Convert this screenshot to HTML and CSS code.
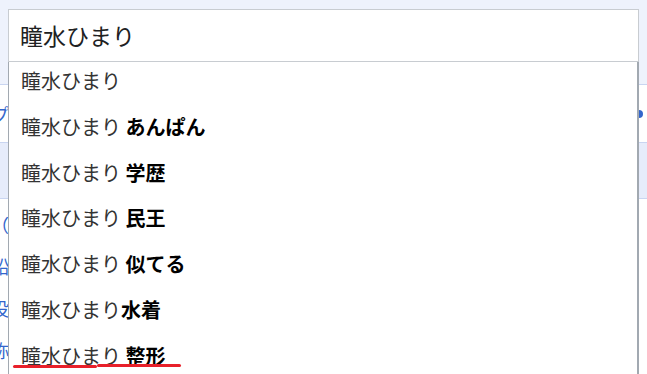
FILE: index.html
```html
<!DOCTYPE html>
<html>
<head>
  <meta charset="utf-8">
  <title>瞳水ひまり - 検索</title>
  <link rel="stylesheet" href="styles.css">
</head>
<body>
  <div class="page">
    <div class="header"></div>
    <div class="tabs">
      <span class="tab-link">プロフィール</span>
      <span class="tab-dot"></span>
    </div>
    <div class="notice"></div>
    <ul class="facts">
      <li>（愛称）</li>
      <li>鉛筆</li>
      <li>役柄</li>
      <li>称号</li>
    </ul>
  </div>

  <div class="search">
    <div class="search-input">瞳水ひまり</div>
    <ul class="suggestions">
      <li>瞳水ひまり</li>
      <li>瞳水ひまり <b>あんぱん</b></li>
      <li>瞳水ひまり <b>学歴</b></li>
      <li>瞳水ひまり <b>民王</b></li>
      <li>瞳水ひまり <b>似てる</b></li>
      <li>瞳水ひまり<b>水着</b></li>
      <li>瞳水ひまり <b>整形</b></li>
    </ul>
    <span class="squiggle one"></span>
    <span class="squiggle two"></span>
  </div>
</body>
</html>
```

FILE: styles.css
```css
* {
  margin: 0;
  padding: 0;
  box-sizing: border-box;
}
body {
  position: relative;
  width: 647px;
  height: 374px;
  overflow: hidden;
  background: #fff;
  font-family: "Noto Sans CJK JP", sans-serif;
}
.header {
  height: 85px;
  background: #eef2fc;
  border-bottom: 1px solid #c9d5f1;
}
.tabs {
  height: 58px;
  display: flex;
  justify-content: space-between;
  align-items: center;
  border-bottom: 1px solid #c9d5f1;
}
.tab-link {
  margin-left: -9px;
  color: #3366cc;
  font-size: 18px;
}
.tab-dot {
  width: 8px;
  height: 8px;
  margin-right: 4px;
  border-radius: 50%;
  background: #3366cc;
}
.notice {
  height: 56px;
  background: #e6ecfb;
  border-bottom: 1px solid #c9d5f1;
}
.facts {
  list-style: none;
  padding-top: 12px;
}
.facts li {
  height: 42px;
  margin-left: -9px;
  color: #3366cc;
  font-size: 18px;
}
.search {
  position: absolute;
  top: 9px;
  left: 8px;
  right: 8px;
  bottom: 0;
  display: flex;
  flex-direction: column;
}
.search-input {
  position: relative;
  z-index: 1;
  height: 53px;
  padding-left: 11px;
  border: 1px solid #c8ccd1;
  background: #fff;
  color: #202122;
  font-size: 23px;
  line-height: 51px;
}
.suggestions {
  flex: 1;
  margin-top: -4px;
  overflow: hidden;
  list-style: none;
  background: #fff;
  border-left: 1px solid #a2a9b1;
  border-right: 2px solid #a2a9b1;
}
.suggestions li {
  height: 45.8px;
  padding-left: 12px;
  color: #333;
  font-size: 20px;
  line-height: 45.8px;
  white-space: nowrap;
}
.suggestions b {
  color: #000;
}
.squiggle {
  position: absolute;
  height: 3px;
  border-radius: 2px;
  background: #e8202a;
}
.one {
  top: 356px;
  left: 5px;
  width: 84px;
}
.two {
  top: 355px;
  left: 89px;
  width: 84px;
}
```
